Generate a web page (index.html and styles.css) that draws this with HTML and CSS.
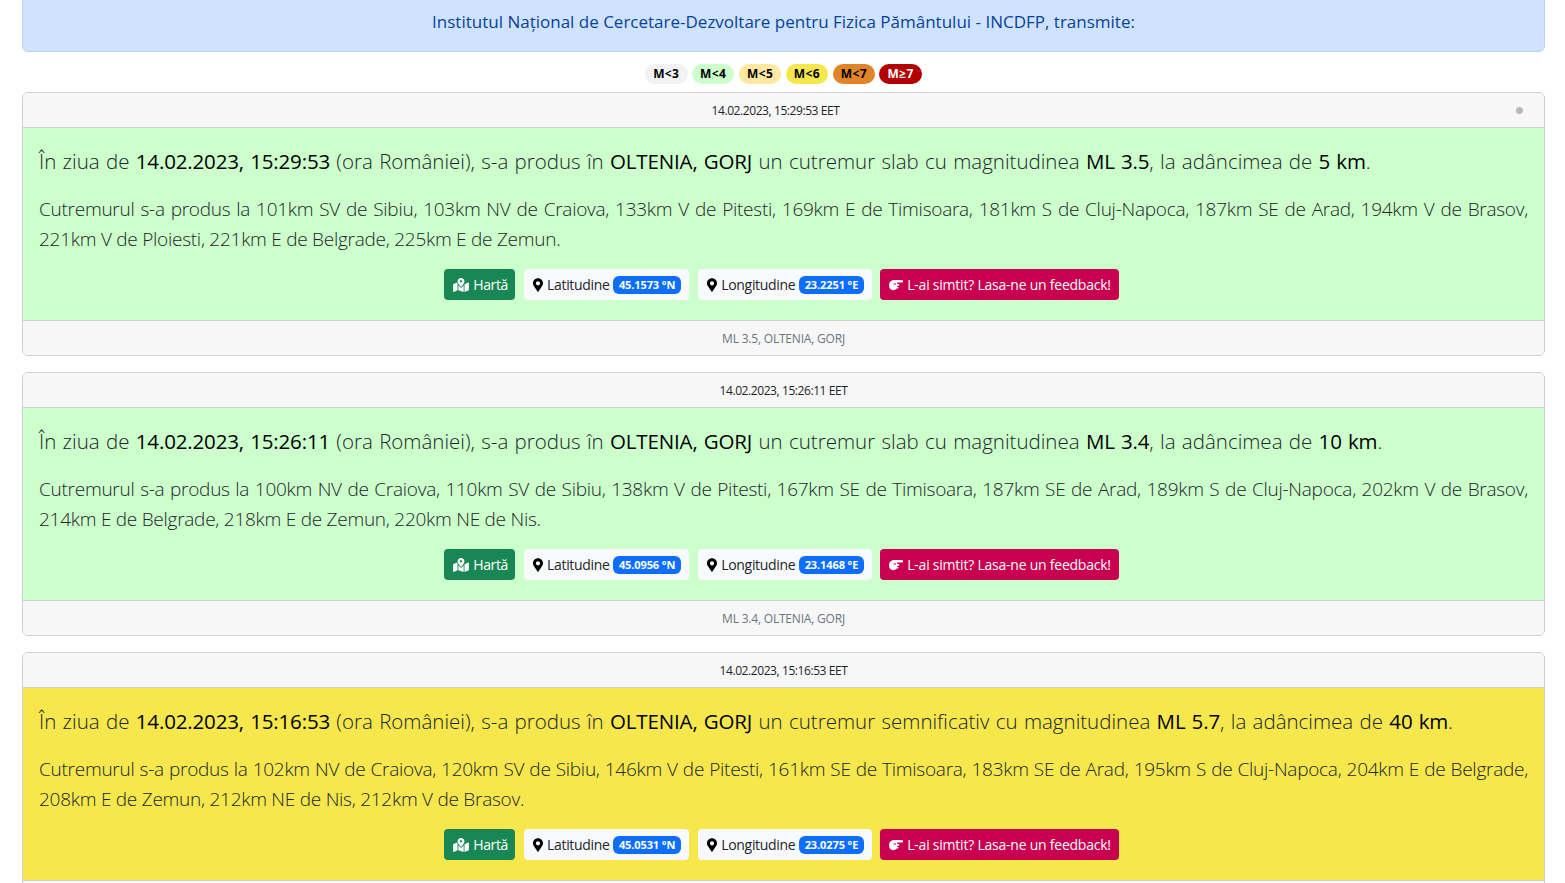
FILE: index.html
```html
<!DOCTYPE html>
<html lang="ro">
<head>
<meta charset="utf-8">
<title>INCDFP</title>
<link rel="stylesheet" href="styles.css">
</head>
<body>
<svg class="sprite" aria-hidden="true">
<symbol id="i-map" viewBox="0 0 576 512"><path d="M288 0c-69.59 0-126 56.41-126 126 0 56.26 82.35 158.8 113.9 196.02 6.39 7.54 17.82 7.54 24.2 0C331.65 284.8 414 182.26 414 126 414 56.41 357.59 0 288 0zm0 168c-23.2 0-42-18.8-42-42s18.8-42 42-42 42 18.8 42 42-18.8 42-42 42zM20.12 215.95A32.006 32.006 0 0 0 0 245.66v250.32c0 11.32 11.43 19.06 21.94 14.86L160 448V214.92c-8.84-15.98-16.07-31.54-21.25-46.42L20.12 215.95zM288 359.67c-14.07 0-27.38-6.18-36.51-16.96-19.66-23.2-40.57-49.62-59.49-76.72v182l192 64V266c-18.92 27.09-39.82 53.52-59.49 76.72-9.13 10.77-22.44 16.95-36.51 16.95zm266.06-198.51L416 224v288l139.88-55.95A31.996 31.996 0 0 0 576 426.34V176.02c0-11.32-11.43-19.06-21.94-14.86z"/></symbol>
<symbol id="i-pin" viewBox="0 0 384 512"><path d="M172.268 501.67C26.97 291.031 0 262.752 0 192 0 85.961 85.961 0 192 0s192 85.961 192 192c0 70.752-26.97 99.031-172.268 309.67-9.535 13.774-29.93 13.773-39.464 0zM192 272c44.183 0 80-35.817 80-80s-35.817-80-80-80-80 35.817-80 80 35.817 80 80 80z"/></symbol>
<symbol id="i-hand" viewBox="0 0 14 14"><path fill-rule="evenodd" d="M0 7C0 3.5 3 2 5 2H12.8a1.2 1.2 0 0 1 0 2.6H8.2V6H9.5a.9.9 0 0 1 0 1.8H8.2V9H8.8a.8.8 0 0 1 0 1.6H7.6C6.5 12 4.5 12.5 3 12 1 11.5 0 9.5 0 7ZM4.6 5.6V6.6H7V5.6Z"/></symbol>
</svg>
<main class="page">
  <div class="alert">Institutul Naţional de Cercetare-Dezvoltare pentru Fizica Pământului - INCDFP, transmite:</div>
  <div class="legend">
    <span class="pill m3">M&lt;3</span>
    <span class="pill m4">M&lt;4</span>
    <span class="pill m5">M&lt;5</span>
    <span class="pill m6">M&lt;6</span>
    <span class="pill m7">M&lt;7</span>
    <span class="pill m8">M≥7</span>
  </div>

  <article class="card">
    <header class="card-head card-head-live">14.02.2023, 15:29:53 EET<span class="dot"></span></header>
    <div class="card-body green">
      <p class="lead">În ziua de <b>14.02.2023, 15:29:53</b> (ora României), s-a produs în <b>OLTENIA, GORJ</b> un cutremur slab cu magnitudinea <b>ML 3.5</b>, la adâncimea de <b>5 km</b>.</p>
      <p class="dist">Cutremurul s-a produs la 101km SV de Sibiu, 103km NV de Craiova, 133km V de Pitesti, 169km E de Timisoara, 181km S de Cluj-Napoca, 187km SE de Arad, 194km V de Brasov, 221km V de Ploiesti, 221km E de Belgrade, 225km E de Zemun.</p>
      <div class="actions">
        <a class="btn btn-map"><svg class="ico ico-map"><use href="#i-map"/></svg>Hartă</a>
        <span class="btn btn-light"><svg class="ico ico-pin"><use href="#i-pin"/></svg>Latitudine <span class="badge">45.1573 °N</span></span>
        <span class="btn btn-light"><svg class="ico ico-pin"><use href="#i-pin"/></svg>Longitudine <span class="badge">23.2251 °E</span></span>
        <a class="btn btn-feedback"><svg class="ico ico-hand"><use href="#i-hand"/></svg>L-ai simtit? Lasa-ne un feedback!</a>
      </div>
    </div>
    <footer class="card-foot">ML 3.5, OLTENIA, GORJ</footer>
  </article>

  <article class="card">
    <header class="card-head">14.02.2023, 15:26:11 EET</header>
    <div class="card-body green">
      <p class="lead">În ziua de <b>14.02.2023, 15:26:11</b> (ora României), s-a produs în <b>OLTENIA, GORJ</b> un cutremur slab cu magnitudinea <b>ML 3.4</b>, la adâncimea de <b>10 km</b>.</p>
      <p class="dist">Cutremurul s-a produs la 100km NV de Craiova, 110km SV de Sibiu, 138km V de Pitesti, 167km SE de Timisoara, 187km SE de Arad, 189km S de Cluj-Napoca, 202km V de Brasov, 214km E de Belgrade, 218km E de Zemun, 220km NE de Nis.</p>
      <div class="actions">
        <a class="btn btn-map"><svg class="ico ico-map"><use href="#i-map"/></svg>Hartă</a>
        <span class="btn btn-light"><svg class="ico ico-pin"><use href="#i-pin"/></svg>Latitudine <span class="badge">45.0956 °N</span></span>
        <span class="btn btn-light"><svg class="ico ico-pin"><use href="#i-pin"/></svg>Longitudine <span class="badge">23.1468 °E</span></span>
        <a class="btn btn-feedback"><svg class="ico ico-hand"><use href="#i-hand"/></svg>L-ai simtit? Lasa-ne un feedback!</a>
      </div>
    </div>
    <footer class="card-foot">ML 3.4, OLTENIA, GORJ</footer>
  </article>

  <article class="card">
    <header class="card-head">14.02.2023, 15:16:53 EET</header>
    <div class="card-body yellow">
      <p class="lead">În ziua de <b>14.02.2023, 15:16:53</b> (ora României), s-a produs în <b>OLTENIA, GORJ</b> un cutremur semnificativ cu magnitudinea <b>ML 5.7</b>, la adâncimea de <b>40 km</b>.</p>
      <p class="dist">Cutremurul s-a produs la 102km NV de Craiova, 120km SV de Sibiu, 146km V de Pitesti, 161km SE de Timisoara, 183km SE de Arad, 195km S de Cluj-Napoca, 204km E de Belgrade, 208km E de Zemun, 212km NE de Nis, 212km V de Brasov.</p>
      <div class="actions">
        <a class="btn btn-map"><svg class="ico ico-map"><use href="#i-map"/></svg>Hartă</a>
        <span class="btn btn-light"><svg class="ico ico-pin"><use href="#i-pin"/></svg>Latitudine <span class="badge">45.0531 °N</span></span>
        <span class="btn btn-light"><svg class="ico ico-pin"><use href="#i-pin"/></svg>Longitudine <span class="badge">23.0275 °E</span></span>
        <a class="btn btn-feedback"><svg class="ico ico-hand"><use href="#i-hand"/></svg>L-ai simtit? Lasa-ne un feedback!</a>
      </div>
    </div>
    <footer class="card-foot"></footer>
  </article>
</main>
</body>
</html>
```
FILE: styles.css
```css
* { box-sizing: border-box; }
html, body { height: 100%; overflow: hidden; }
body {
  margin: 0;
  background: #fff;
  color: #212529;
  font-family: "Open Sans", "Noto Sans", sans-serif;
  font-size: 16px;
  line-height: 1.5;
}
.sprite { display: none; }
.page { margin-top: -7px; padding: 0 20px 0 22px; }
.alert {
  height: 59px;
  padding: 16px;
  text-align: center;
  color: #084298;
  background: #cfe2ff;
  border: 1px solid #b6d4fe;
  border-radius: 6px;
  font-size: 17px;
  line-height: 24px;
  letter-spacing: 0;
}
.legend {
  display: flex;
  justify-content: center;
  gap: 4.4px;
  margin: 12px 0 8px;
  height: 20px;
}
.pill {
  display: block;
  width: 42.5px;
  height: 20px;
  border-radius: 10px;
  text-align: center;
  font-size: 12px;
  font-weight: 700;
  line-height: 20px;
  color: #000;
  letter-spacing: 0.4px;
}
.m3 { background: #f2f2f4; }
.m4 { background: #ccffcc; }
.m5 { background: #ffe8a0; }
.m6 { background: #f5e74c; }
.m7 { background: #e08427; }
.m8 { background: #b30000; color: #fff; }
.card {
  margin-bottom: 16px;
  background: #fff;
  border: 1px solid #cfcfcf;
  border-radius: 6px;
  overflow: hidden;
}
.card-head, .card-foot {
  position: relative;
  height: 35px;
  padding: 9px 16px 7px;
  background: #f7f7f7;
  text-align: center;
  font-size: 12px;
  line-height: 18px;
}
.card-head { border-bottom: 1px solid #cfcfcf; color: #212529; letter-spacing: -0.42px; }
.card-head-live { padding-right: 32px; }
.card-foot { border-top: 1px solid #cfcfcf; color: #6c757d; letter-spacing: -0.2px; }
.dot {
  position: absolute;
  top: 14px;
  right: 21px;
  width: 7px;
  height: 7px;
  border-radius: 50%;
  background: #b9b9b9;
}
.card-body { padding: 18px 16px 20px; }
.green { background: #ccffcc; }
.yellow { background: #f5e74c; }
.lead, .dist {
  margin: 0;
  font-weight: 300;
  line-height: 30px;
}
.lead { font-size: 20.5px; word-spacing: 1px; }
.lead b { font-weight: 400; color: #000; letter-spacing: -0.15px; }
.dist { margin-top: 18px; font-size: 19px; letter-spacing: -0.26px; text-align: justify; }
.actions {
  display: flex;
  justify-content: center;
  gap: 9px;
  margin-top: 15px;
  padding-right: 4px;
}
.btn {
  display: inline-flex;
  align-items: center;
  height: 31px;
  padding: 0 8px 0 9px;
  border-radius: 4px;
  font-size: 14px;
  line-height: 21px;
  letter-spacing: -0.35px;
  white-space: pre;
}
.btn-map { padding-right: 7px; background: #198754; color: #fff; }
.btn-light { background: #f8f9fa; color: #212529; letter-spacing: -0.32px; }
.btn-feedback { margin-left: -1px; background: #c9004f; color: #fff; letter-spacing: -0.23px; }
.ico { fill: currentColor; flex: none; }
.ico-map { width: 16px; height: 14px; margin-right: 4px; }
.ico-pin { width: 10px; height: 14px; margin-right: 4px; fill: #000; }
.ico-hand { width: 14px; height: 14px; margin-right: 4px; }
.badge {
  display: inline-block;
  padding: 0 6px;
  height: 18px;
  border-radius: 6px;
  background: #0d6efd;
  color: #fff;
  font-size: 11px;
  font-weight: 700;
  line-height: 18px;
  letter-spacing: -0.1px;
}
```
